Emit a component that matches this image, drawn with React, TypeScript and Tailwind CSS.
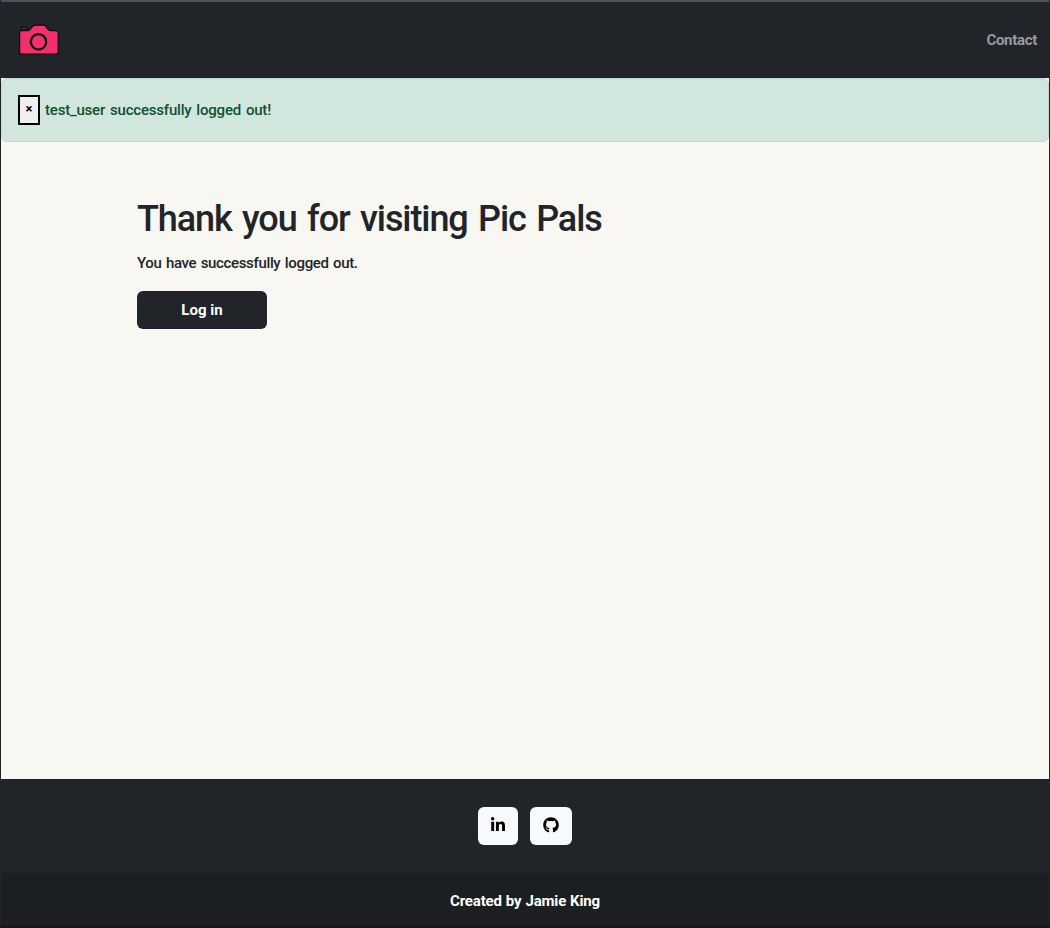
import { FaGithub, FaLinkedinIn } from "react-icons/fa";

function Camera() {
  return (
    <svg viewBox="0 0 42 32" className="h-8 w-[42px]" fill="#f3306b" stroke="#080c10" strokeWidth="1.2" strokeLinejoin="round">
      <path d="M3.6 5.2V4.3Q3.6 3.2 4.7 3.2H7.6Q8.7 3.2 8.7 4.3V5.2Z" />
      <path d="M3.8 6.6H10.4Q12 6.4 13.2 4Q14.8 1.2 17 1.2H25.2Q27.4 1.2 28.6 3.6Q30.4 6.6 32.2 6.6H38Q40.2 6.6 40.2 8.8V28Q40.2 30 38 30H3.6Q1.6 30 1.6 28V8.6Q1.6 6.6 3.8 6.6Z" />
      <circle cx="20.5" cy="17.8" r="7.7" stroke="#080c10" strokeWidth="2.2" />
    </svg>
  );
}

export default function App() {
  return (
    <div className="flex h-[928px] w-full flex-col border-x border-b-2 border-x-[#202526] border-b-[#1c1317] bg-[#f9f7f1] font-['Roboto',sans-serif] text-base text-[#212529]">
      <header className="flex h-[78px] shrink-0 items-center justify-between border-t-2 border-[#505154] bg-[#212429] pl-[17px] pr-3">
        <a href="#"><Camera /></a>
        <a href="#" className="text-[15px] font-bold tracking-[-0.3px] text-[#999b9d]">Contact</a>
      </header>
      <div className="flex h-16 shrink-0 items-center rounded-md border border-[#badbcc] bg-[#d1e7dd] px-4">
        <button className="h-[30px] w-[22px] border-2 border-black bg-[#efefef] pb-1 text-[13px] font-bold leading-none text-black">×</button>
        <span className="ml-[5px] whitespace-nowrap text-[15px] font-medium tracking-[-0.2px] text-[#0f5132] [word-spacing:1.4px]">test_user successfully logged out!</span>
      </div>
      <main className="flex-1 px-[136px] pt-[53px]">
        <h1 className="whitespace-nowrap text-[36px] font-medium leading-[48px] tracking-[-1.1px] [word-spacing:2.6px]">Thank you for visiting Pic Pals</h1>
        <p className="mt-2 text-[15px] font-medium leading-6 tracking-[-0.35px] [word-spacing:1.1px]">You have successfully logged out.</p>
        <button className="mt-4 h-[38px] w-[130px] rounded-md bg-[#212529] text-[15px] font-bold text-white">Log in</button>
      </main>
      <footer className="shrink-0 text-white">
        <div className="flex h-[94px] items-center justify-center gap-3 bg-[#212529]">
          <a href="#" className="flex h-[38px] w-10 items-center justify-center rounded-md bg-[#f8f9fc] pb-0.5 text-black"><FaLinkedinIn size={16} /></a>
          <a href="#" className="flex h-[38px] w-[42px] items-center justify-center rounded-md bg-[#f8f9fc] pb-0.5 text-black"><FaGithub size={16} /></a>
        </div>
        <div className="flex h-[53px] items-center justify-center bg-[#1b1f21] pt-1 text-[15px] font-bold tracking-[-0.15px] [word-spacing:0.4px]">Created by Jamie King</div>
      </footer>
    </div>
  );
}
